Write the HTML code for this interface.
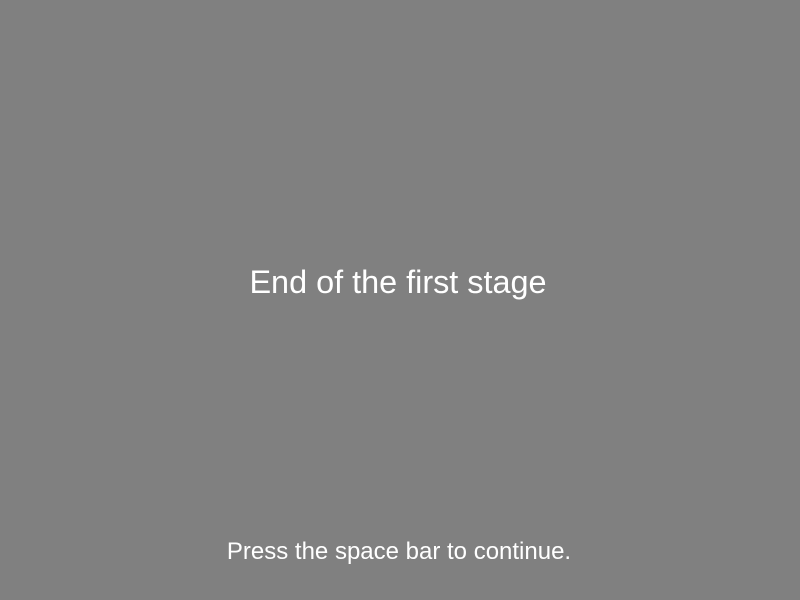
<!DOCTYPE html>
<html><head><meta charset="utf-8"><style>
html,body{margin:0;padding:0;width:800px;height:600px;background:#808080;overflow:hidden}
.t{position:absolute;left:-2px;width:800px;text-align:center;color:#fff;font-family:"Liberation Sans",sans-serif;white-space:nowrap}
#a{top:262px;font-size:32.4px;line-height:40px}
#b{top:537px;font-size:24px;line-height:30px;left:-1px}
</style></head><body>
<div class="t" id="a">End of the first stage</div>
<div class="t" id="b">Press the space bar to continue.</div>
</body></html>
